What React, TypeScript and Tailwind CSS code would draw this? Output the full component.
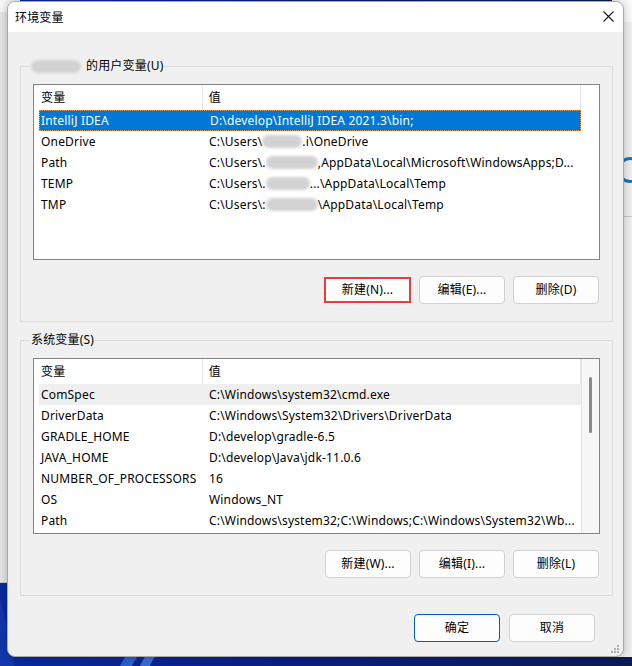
import React from 'react';
import clsx from 'clsx';

type Part = string | number;
type Item = { name: string; value: Part[]; selected?: boolean; hover?: boolean };

const userVars: Item[] = [
  { name: 'IntelliJ IDEA', value: ['D:\\develop\\IntelliJ IDEA 2021.3\\bin;'], selected: true },
  { name: 'OneDrive', value: ['C:\\Users\\', 40, '.i\\OneDrive'] },
  { name: 'Path', value: ['C:\\Users\\.', 52, ',AppData\\Local\\Microsoft\\WindowsApps;D...'] },
  { name: 'TEMP', value: ['C:\\Users\\.', 44, '...\\AppData\\Local\\Temp'] },
  { name: 'TMP', value: ['C:\\Users\\:', 52, '\\AppData\\Local\\Temp'] },
];

const sysVars: Item[] = [
  { name: 'ComSpec', value: ['C:\\Windows\\system32\\cmd.exe'], hover: true },
  { name: 'DriverData', value: ['C:\\Windows\\System32\\Drivers\\DriverData'] },
  { name: 'GRADLE_HOME', value: ['D:\\develop\\gradle-6.5'] },
  { name: 'JAVA_HOME', value: ['D:\\develop\\Java\\jdk-11.0.6'] },
  { name: 'NUMBER_OF_PROCESSORS', value: ['16'] },
  { name: 'OS', value: ['Windows_NT'] },
  { name: 'Path', value: ['C:\\Windows\\system32;C:\\Windows;C:\\Windows\\System32\\Wb...'] },
];

function Blob({ w }: { w: number }) {
  return (
    <span
      className="inline-block h-[13px] rounded-full bg-[#d2d2d2] blur-[1.5px] shrink-0"
      style={{ width: w }}
    />
  );
}

function Row({ item }: { item: Item }) {
  return (
    <div
      className={clsx(
        'ml-[5px] w-[542px] h-[21px] shrink-0 flex items-center',
        item.selected && 'bg-[#0078d7] text-white border border-dotted border-[#e8964a]',
        item.hover && 'bg-[#efefef]'
      )}
    >
      <div className={clsx('w-[170px] whitespace-nowrap overflow-hidden', item.selected ? 'pl-[1px]' : 'pl-[2px]')}>
        {item.name}
      </div>
      <div className="flex-1 flex items-center whitespace-nowrap overflow-hidden">
        {item.value.map((p, i) =>
          typeof p === 'number' ? <Blob key={i} w={p} /> : <span key={i}>{p}</span>
        )}
      </div>
    </div>
  );
}

function List({ items, scroll }: { items: Item[]; scroll?: boolean }) {
  return (
    <div className="w-[567px] h-[176px] border border-[#838383] bg-white flex overflow-hidden">
      <div className="w-[547px] flex flex-col">
        <div className="h-[25px] flex shrink-0">
          <div className="w-[169px] pl-[7px] flex items-center border-r border-[#e5e5e5]">变量</div>
          <div className="w-[379px] pl-[6px] flex items-center border-r border-[#e5e5e5]">值</div>
        </div>
        {items.map((it) => (
          <Row key={it.name + it.value.join('')} item={it} />
        ))}
      </div>
      {scroll ? (
        <div className="flex-1 bg-[#f7f7f7] border-l border-[#e3e3e3] relative">
          <div className="absolute left-[7px] top-[18px] w-[3px] h-[56px] rounded-full bg-[#8a8a8a]" />
        </div>
      ) : (
        <div className="flex-1" />
      )}
    </div>
  );
}

function Btn({ children, red, primary }: { children: React.ReactNode; red?: boolean; primary?: boolean }) {
  return (
    <div
      className={clsx(
        'flex items-center justify-center bg-[#fdfdfd] text-[12px] text-black',
        red
          ? 'w-[87px] h-[26px] border-2 border-[#f03a3a]'
          : 'w-[86px] h-[28px] rounded-[4px] border',
        primary ? 'border-[#005fb8]' : !red && 'border-[#d1d1d1]'
      )}
    >
      {children}
    </div>
  );
}

function Group({ label, items, scroll, buttons }: { label: React.ReactNode; items: Item[]; scroll?: boolean; buttons: React.ReactNode }) {
  return (
    <div className="relative w-[593px] h-[256px] border border-[#dcdcdc] pt-[17px] pl-[12px] pr-[13px] flex flex-col">
      <div className="absolute left-[9px] -top-[9px] px-[1px] bg-[#f0f0f0] leading-[16px] flex items-center">{label}</div>
      <List items={items} scroll={scroll} />
      <div className="mt-[16px] flex justify-end items-center gap-[8px] h-[28px]">{buttons}</div>
    </div>
  );
}

function Wallpaper() {
  return (
    <svg className="absolute left-0 top-0" width="632" height="666" viewBox="0 0 632 666">
      <defs>
        <linearGradient id="wp" x1="0" y1="0" x2="1" y2="0">
          <stop offset="0" stopColor="#0a2a9c" />
          <stop offset="0.4" stopColor="#0b1f86" />
          <stop offset="1" stopColor="#0d1a55" />
        </linearGradient>
      </defs>
      <rect width="632" height="666" fill="url(#wp)" />
      <path d="M120 666 C 128 650, 140 640, 150 630 L 158 630 C 148 642, 138 654, 132 666 Z" fill="#2f6fd8" opacity="0.8" />
      <path d="M140 666 C 146 652, 156 642, 166 634 L 172 636 C 162 646, 154 656, 150 666 Z" fill="#4d8ae8" opacity="0.7" />
      <path d="M0 600 L 0 666 L 14 666 C 10 640, 6 620, 0 600 Z" fill="#1840b8" opacity="0.6" />
    </svg>
  );
}

export default function App() {
  return (
    <div className="relative w-[632px] h-[666px] overflow-hidden [font-family:'Noto_Sans','Noto_Sans_CJK_SC',sans-serif] text-[12px] tracking-[0.18px] text-black">
      <Wallpaper />
      {/* windows behind */}
      <div className="absolute left-0 top-0 w-[20px] h-[583px] bg-[#e4e4e4] border-b border-[#c8c8c8]">
        <div className="h-[12px] bg-[#f6f6f6]" />
      </div>
      <div className="absolute right-0 top-0 w-[20px] h-[657px] bg-[#eeeeee]">
        <div className="h-[22px] bg-[#fafafa]" />
        <div className="absolute left-[5px] top-[157px] w-[26px] h-[26px] rounded-full border-[3px] border-[#1a6fc4]" />
        <div className="absolute left-0 top-[216px] w-[20px] h-[1px] bg-[#c4c4c4]" />
      </div>

      {/* dialog window */}
      <div className="absolute left-[7px] top-[1px] w-[617px] h-[656px] rounded-[8px] overflow-hidden border border-[#a9a9a9] bg-[#f0f0f0] shadow-[0_0_8px_rgba(0,0,0,0.25)] flex flex-col">
        <div className="h-[30px] bg-white flex items-center justify-between shrink-0">
          <div className="pl-[7px] pt-[1px]">环境变量</div>
          <svg className="mr-[9px] mb-[1px]" width="11" height="11" viewBox="0 0 11 11">
            <path d="M0.5 0.5 L10.5 10.5 M10.5 0.5 L0.5 10.5" stroke="#1a1a1a" strokeWidth="1.1" fill="none" />
          </svg>
        </div>

        <div className="flex flex-col pl-[12px]">
          <div className="mt-[34px]">
            <Group
              label={
                <>
                  <Blob w={50} />
                  <span className="ml-[5px]">的用户变量(U)</span>
                </>
              }
              items={userVars}
              buttons={
                <>
                  <Btn red>新建(N)...</Btn>
                  <Btn>编辑(E)...</Btn>
                  <Btn>删除(D)</Btn>
                </>
              }
            />
          </div>
          <div className="mt-[18px]">
            <Group
              label={<span>系统变量(S)</span>}
              items={sysVars}
              scroll
              buttons={
                <>
                  <Btn>新建(W)...</Btn>
                  <Btn>编辑(I)...</Btn>
                  <Btn>删除(L)</Btn>
                </>
              }
            />
          </div>
          <div className="mt-[18px] flex justify-end gap-[9px] pr-[28px]">
            <Btn primary>确定</Btn>
            <Btn>取消</Btn>
          </div>
        </div>

        <svg className="absolute right-[3px] bottom-[2px]" width="9" height="9" viewBox="0 0 9 9">
          <rect x="6" y="0" width="2" height="2" fill="#b0b0b0" />
          <rect x="3" y="3" width="2" height="2" fill="#b0b0b0" />
          <rect x="6" y="3" width="2" height="2" fill="#b0b0b0" />
          <rect x="0" y="6" width="2" height="2" fill="#b0b0b0" />
          <rect x="3" y="6" width="2" height="2" fill="#b0b0b0" />
          <rect x="6" y="6" width="2" height="2" fill="#b0b0b0" />
        </svg>
      </div>
    </div>
  );
}
